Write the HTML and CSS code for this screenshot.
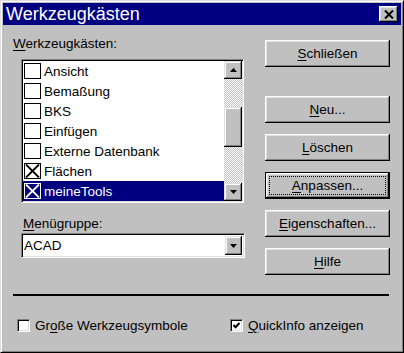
FILE: index.html
```html
<!DOCTYPE html>
<html lang="de">
<head>
    <meta charset="UTF-8">
    <title>Werkzeugkästen</title>
    <link rel="stylesheet" href="styles.css">
</head>
<body>
    <div class="window">
        <div class="titlebar">
            <span class="title">Werkzeugkästen</span>
            <span class="close-button">
                <svg width="10" height="9" viewBox="0 0 10 9"><path d="M1 0.5 L9 8.5 M9 0.5 L1 8.5" stroke="#000" stroke-width="2"/></svg>
            </span>
        </div>

        <div class="content">
            <div class="main">
                <!-- linke Spalte: Liste und Menügruppe -->
                <div class="left-column">
                    <div class="label label-list"><u>W</u>erkzeugkästen:</div>
                    <div class="listbox">
                        <ul class="items">
                            <li class="item"><span class="check"></span>Ansicht</li>
                            <li class="item"><span class="check"></span>Bemaßung</li>
                            <li class="item"><span class="check"></span>BKS</li>
                            <li class="item"><span class="check"></span>Einfügen</li>
                            <li class="item"><span class="check"></span>Externe Datenbank</li>
                            <li class="item"><span class="check checked"><svg width="15" height="14" viewBox="0 0 15 14"><path d="M1 0.5 L14 13.5 M14 0.5 L1 13.5" stroke="#000" stroke-width="1.8"/></svg></span>Flächen</li>
                            <li class="item selected"><span class="check checked"><svg width="15" height="14" viewBox="0 0 15 14"><path d="M1 0.5 L14 13.5 M14 0.5 L1 13.5" stroke="#fff" stroke-width="1.8"/></svg></span>meineTools</li>
                        </ul>
                        <div class="scrollbar">
                            <span class="scroll-button">
                                <svg width="7" height="4" viewBox="0 0 7 4"><polygon points="3.5,0 7,4 0,4" fill="#000"/></svg>
                            </span>
                            <div class="track">
                                <div class="thumb"></div>
                            </div>
                            <span class="scroll-button">
                                <svg width="7" height="4" viewBox="0 0 7 4"><polygon points="0,0 7,0 3.5,4" fill="#000"/></svg>
                            </span>
                        </div>
                    </div>

                    <div class="label label-menu"><u>M</u>enügruppe:</div>
                    <div class="combo">
                        <span class="combo-text">ACAD</span>
                        <span class="combo-button">
                            <svg width="7" height="4" viewBox="0 0 7 4"><polygon points="0,0 7,0 3.5,4" fill="#000"/></svg>
                        </span>
                    </div>
                </div>

                <!-- rechte Spalte: Schaltflächen -->
                <div class="button-column">
                    <div class="button first"><span><u>S</u>chließen</span></div>
                    <div class="button"><span><u>N</u>eu...</span></div>
                    <div class="button"><span><u>L</u>öschen</span></div>
                    <div class="button default"><span class="focus"><u>A</u>npassen...</span></div>
                    <div class="button"><span><u>E</u>igenschaften...</span></div>
                    <div class="button"><span><u>H</u>ilfe</span></div>
                </div>
            </div>

            <div class="separator"></div>

            <div class="options">
                <label class="option">
                    <span class="small-check"></span>
                    <span>Gr<u>o</u>ße Werkzeugsymbole</span>
                </label>
                <label class="option">
                    <span class="small-check">
                        <svg width="7" height="7" viewBox="0 0 7 7"><path d="M0.5 3 L2.5 5.2 L6.5 1" stroke="#000" stroke-width="2" fill="none"/></svg>
                    </span>
                    <span><u>Q</u>uickInfo anzeigen</span>
                </label>
            </div>
        </div>
    </div>
</body>
</html>
```

FILE: styles.css
```css
html, body {
    margin: 0;
    padding: 0;
    background-color: #c0c0c0;
}

u {
    text-decoration: underline;
    text-underline-offset: 2px;
}

.window {
    width: 404px;
    height: 353px;
    box-sizing: border-box;
    padding: 2px;
    border: 1px solid;
    border-color: #dfdfdf #000 #000 #dfdfdf;
    box-shadow: inset 1px 1px #fff, inset -1px -1px #808080;
    background-color: #c0c0c0;
    font-family: "Liberation Sans", Arial, sans-serif;
    font-size: 13.5px;
    color: #000;
    display: flex;
    flex-direction: column;
}

/* Titelleiste */
.titlebar {
    height: 22px;
    flex-shrink: 0;
    background-color: #000080;
    color: #fff;
    display: flex;
    align-items: center;
    justify-content: space-between;
    padding: 0 3px;
}

.title {
    font-size: 18px;
    line-height: 22px;
}

.close-button {
    width: 19px;
    height: 16px;
    box-sizing: border-box;
    background-color: #c0c0c0;
    box-shadow: inset -1px -1px #000, inset 1px 1px #fff, inset -2px -2px #808080, inset 2px 2px #dfdfdf;
    display: flex;
    align-items: center;
    justify-content: center;
}

.content {
    flex: 1;
    padding: 0 11px 0 10px;
    display: flex;
    flex-direction: column;
}

.main {
    display: flex;
    justify-content: space-between;
}

.left-column {
    width: 232px;
}

.label {
    line-height: 15px;
}

.label-list {
    margin-top: 11px;
}

.label-menu {
    margin-top: 13px;
    margin-left: 10px;
}

/* Liste mit Kontrollkästchen */
.listbox {
    margin-top: 8px;
    margin-left: 8px;
    width: 223px;
    height: 144px;
    box-sizing: border-box;
    border: 1px solid;
    border-color: #808080 #fff #fff #808080;
    padding: 1px;
    box-shadow: inset 1px 1px #000, inset -1px -1px #dfdfdf;
    display: flex;
}

.items {
    flex: 1;
    margin: 0;
    padding: 0;
    list-style: none;
    background-color: #fff;
}

.item {
    height: 20px;
    display: flex;
    align-items: center;
    gap: 3px;
}

.item.selected {
    background-color: #000080;
    color: #fff;
}

.check {
    width: 17px;
    height: 16px;
    box-sizing: border-box;
    margin-left: 1px;
    border: 1px solid #000;
    display: flex;
    align-items: center;
    justify-content: center;
}

.selected .check {
    border-color: #fff;
}

.scrollbar {
    width: 18px;
    display: flex;
    flex-direction: column;
}

.scroll-button,
.combo-button {
    height: 18px;
    flex-shrink: 0;
    background-color: #c0c0c0;
    box-shadow: inset -1px -1px #000, inset 1px 1px #dfdfdf, inset -2px -2px #808080, inset 2px 2px #fff;
    display: flex;
    align-items: center;
    justify-content: center;
}

.track {
    flex: 1;
    background-image: repeating-conic-gradient(#fff 0 25%, #c0c0c0 0 50%);
    background-size: 2px 2px;
}

.thumb {
    margin-top: 28px;
    height: 40px;
    background-color: #c0c0c0;
    box-shadow: inset -1px -1px #000, inset 1px 1px #dfdfdf, inset -2px -2px #808080, inset 2px 2px #fff;
}

/* Kombinationsfeld */
.combo {
    margin-top: 2px;
    margin-left: 8px;
    width: 224px;
    height: 25px;
    box-sizing: border-box;
    border: 1px solid;
    border-color: #808080 #fff #fff #808080;
    padding: 2px 2px 2px 1px;
    box-shadow: inset 1px 1px #000, inset -1px -1px #dfdfdf;
    background-color: #fff;
    display: flex;
    align-items: center;
}

.combo-text {
    flex: 1;
    padding-left: 1px;
}

.combo-button {
    width: 17px;
    height: 19px;
}

/* Schaltflächen */
.button-column {
    width: 125px;
    margin-top: 15px;
    display: flex;
    flex-direction: column;
    gap: 11px;
}

.button {
    height: 27px;
    box-sizing: border-box;
    background-color: #c0c0c0;
    box-shadow: inset -1px -1px #000, inset 1px 1px #fff, inset -2px -2px #808080, inset 2px 2px #dfdfdf;
    display: flex;
    align-items: center;
    justify-content: center;
}

.button.first {
    margin-bottom: 18px;
}

.button.default {
    border: 1px solid #000;
    padding: 3px;
}

.focus {
    flex: 1;
    align-self: stretch;
    display: flex;
    align-items: center;
    justify-content: center;
    outline: 1px dotted #000;
    outline-offset: -1px;
}

.separator {
    margin-top: 19px;
    margin-right: 1px;
    height: 2px;
    background-color: #000;
}

/* Optionen unten */
.options {
    margin-top: 22px;
    padding-left: 4px;
    display: grid;
    grid-template-columns: 213px auto;
    line-height: 15px;
}

.option {
    display: flex;
    align-items: center;
    gap: 5px;
}

.small-check {
    width: 13px;
    height: 13px;
    box-sizing: border-box;
    border: 1px solid;
    border-color: #808080 #fff #fff #808080;
    box-shadow: inset 1px 1px #000, inset -1px -1px #dfdfdf;
    background-color: #fff;
    display: flex;
    align-items: center;
    justify-content: center;
}
```
